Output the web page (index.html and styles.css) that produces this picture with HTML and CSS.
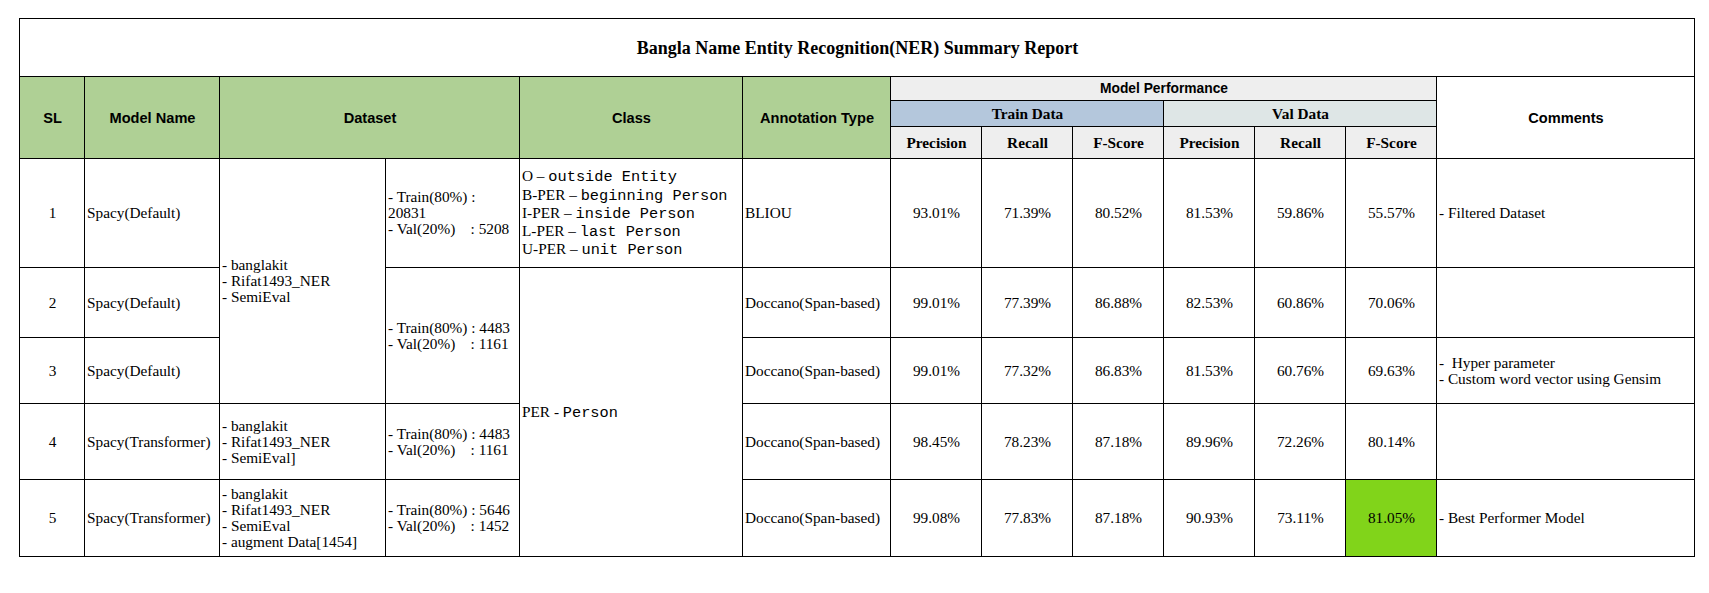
FILE: index.html
```html
<!DOCTYPE html>
<html lang="en">
<head>
<meta charset="utf-8">
<title>Bangla Name Entity Recognition(NER) Summary Report</title>
<link rel="stylesheet" href="styles.css">
</head>
<body>
<div class="page">
<table class="report">
  <colgroup>
    <col class="c-sl"><col class="c-model"><col class="c-dsa"><col class="c-dsb"><col class="c-class"><col class="c-annot">
    <col class="c-num"><col class="c-num"><col class="c-num"><col class="c-num"><col class="c-num"><col class="c-num">
    <col class="c-comm">
  </colgroup>
  <tr class="r-title"><td colspan="13" class="title">Bangla Name Entity Recognition(NER) Summary Report</td></tr>
  <tr class="r-h1">
    <th rowspan="3" class="gh">SL</th>
    <th rowspan="3" class="gh">Model Name</th>
    <th rowspan="3" colspan="2" class="gh">Dataset</th>
    <th rowspan="3" class="gh">Class</th>
    <th rowspan="3" class="gh">Annotation Type</th>
    <th colspan="6" class="mp">Model Performance</th>
    <th rowspan="3" class="ch">Comments</th>
  </tr>
  <tr class="r-h2">
    <th colspan="3" class="train">Train Data</th>
    <th colspan="3" class="val">Val Data</th>
  </tr>
  <tr class="r-h3">
    <th class="metric">Precision</th><th class="metric">Recall</th><th class="metric">F-Score</th>
    <th class="metric">Precision</th><th class="metric">Recall</th><th class="metric">F-Score</th>
  </tr>
  <tr class="r1">
    <td class="sl">1</td>
    <td class="txt">Spacy(Default)</td>
    <td rowspan="3" class="txt">- banglakit<br>- Rifat1493_NER<br>- SemiEval</td>
    <td class="txt pre">- Train(80%) :<br>20831<br>- Val(20%)    : 5208</td>
    <td class="txt cls">O – <span class="mono">outside Entity</span><br>B-PER – <span class="mono">beginning Person</span><br>I-PER – <span class="mono">inside Person</span><br>L-PER – <span class="mono">last Person</span><br>U-PER – <span class="mono">unit Person</span></td>
    <td class="txt">BLIOU</td>
    <td class="num">93.01%</td><td class="num">71.39%</td><td class="num">80.52%</td>
    <td class="num">81.53%</td><td class="num">59.86%</td><td class="num">55.57%</td>
    <td class="txt">- Filtered Dataset</td>
  </tr>
  <tr class="r2">
    <td class="sl">2</td>
    <td class="txt">Spacy(Default)</td>
    <td rowspan="2" class="txt pre">- Train(80%) : 4483<br>- Val(20%)    : 1161</td>
    <td rowspan="4" class="txt cls">PER - <span class="mono">Person</span></td>
    <td class="txt">Doccano(Span-based)</td>
    <td class="num">99.01%</td><td class="num">77.39%</td><td class="num">86.88%</td>
    <td class="num">82.53%</td><td class="num">60.86%</td><td class="num">70.06%</td>
    <td class="txt"></td>
  </tr>
  <tr class="r3">
    <td class="sl">3</td>
    <td class="txt">Spacy(Default)</td>
    <td class="txt">Doccano(Span-based)</td>
    <td class="num">99.01%</td><td class="num">77.32%</td><td class="num">86.83%</td>
    <td class="num">81.53%</td><td class="num">60.76%</td><td class="num">69.63%</td>
    <td class="txt pre">-  Hyper parameter<br>- Custom word vector using Gensim</td>
  </tr>
  <tr class="r4">
    <td class="sl">4</td>
    <td class="txt">Spacy(Transformer)</td>
    <td class="txt">- banglakit<br>- Rifat1493_NER<br>- SemiEval]</td>
    <td class="txt pre">- Train(80%) : 4483<br>- Val(20%)    : 1161</td>
    <td class="txt">Doccano(Span-based)</td>
    <td class="num">98.45%</td><td class="num">78.23%</td><td class="num">87.18%</td>
    <td class="num">89.96%</td><td class="num">72.26%</td><td class="num">80.14%</td>
    <td class="txt"></td>
  </tr>
  <tr class="r5">
    <td class="sl">5</td>
    <td class="txt">Spacy(Transformer)</td>
    <td class="txt">- banglakit<br>- Rifat1493_NER<br>- SemiEval<br>- augment Data[1454]</td>
    <td class="txt pre">- Train(80%) : 5646<br>- Val(20%)    : 1452</td>
    <td class="txt">Doccano(Span-based)</td>
    <td class="num">99.08%</td><td class="num">77.83%</td><td class="num">87.18%</td>
    <td class="num">90.93%</td><td class="num">73.11%</td><td class="num best">81.05%</td>
    <td class="txt">- Best Performer Model</td>
  </tr>
</table>
</div>
</body>
</html>
```

FILE: styles.css
```css
html, body {
  margin: 0;
  padding: 0;
  background: #ffffff;
}

.page {
  padding: 18px 0 0 19px;
}

.report {
  border-collapse: collapse;
  table-layout: fixed;
  width: 1675px;
  font-family: "Liberation Serif", "Times New Roman", serif;
  font-size: 15.3px;
  line-height: 16px;
  color: #000;
}

.c-sl { width: 65px; }
.c-model { width: 135px; }
.c-dsa { width: 166px; }
.c-dsb { width: 134px; }
.c-class { width: 223px; }
.c-annot { width: 148px; }
.c-num { width: 91px; }
.c-comm { width: 258px; }

.report td,
.report th {
  border: 1px solid #000;
  padding: 0 1px 0 2px;
  vertical-align: middle;
  overflow: hidden;
}

.r-title { height: 58px; }
.r-h1 { height: 24px; }
.r-h2 { height: 26px; }
.r-h3 { height: 32px; }
.r1 { height: 109px; }
.r2 { height: 70px; }
.r3 { height: 66px; }
.r4 { height: 76px; }
.r5 { height: 77px; }

.title {
  text-align: center;
  font-weight: bold;
  font-size: 18px;
  line-height: 20px;
}

.gh {
  background: #afd095;
  font-family: "Liberation Sans", Arial, sans-serif;
  font-weight: bold;
  font-size: 14.6px;
  text-align: center;
}

.ch {
  background: #ffffff;
  font-family: "Liberation Sans", Arial, sans-serif;
  font-weight: bold;
  font-size: 14.6px;
  text-align: center;
}

.mp {
  background: #eeeeee;
  font-family: "Liberation Sans", Arial, sans-serif;
  font-weight: bold;
  font-size: 13.8px;
  text-align: center;
}

.train {
  background: #b4c7dc;
  font-weight: bold;
  text-align: center;
}

.val {
  background: #dee6e6;
  font-weight: bold;
  text-align: center;
}

.metric {
  background: #eeeeee;
  font-weight: bold;
  text-align: center;
}

.sl,
.num {
  text-align: center;
}

.txt {
  text-align: left;
}

.pre {
  white-space: pre;
}

.cls {
  line-height: 18px;
}

.mono {
  font-family: "Liberation Mono", "Courier New", monospace;
  font-size: 15.3px;
  line-height: 1;
}

.best {
  background: #81d41a;
}
```
